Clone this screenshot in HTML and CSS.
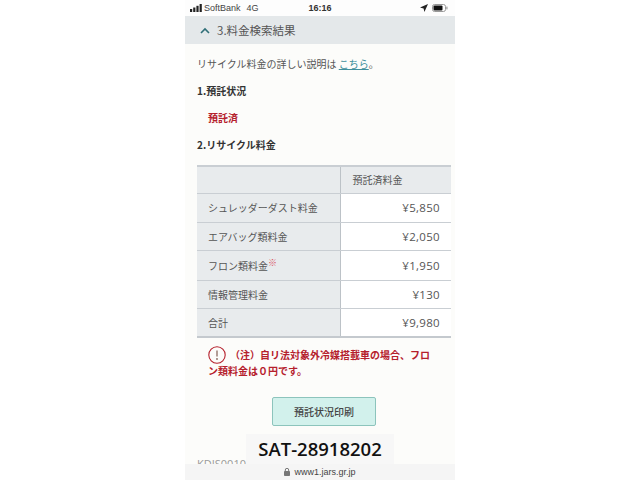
FILE: index.html
```html
<!DOCTYPE html>
<html lang="ja">
<head>
    <meta charset="UTF-8">
    <title>料金検索結果</title>
    <link rel="stylesheet" href="styles.css">
</head>
<body>

    <div class="phone">
        <!-- Status bar -->
        <div class="status-bar">
            <div class="status-left">
                <svg class="signal" width="13" height="8" viewBox="0 0 13 8"><rect x="0" y="5" width="2.2" height="3"/><rect x="3.2" y="3.5" width="2.2" height="4.5"/><rect x="6.4" y="1.8" width="2.2" height="6.2"/><rect x="9.6" y="0" width="2.2" height="8"/></svg>
                <span>SoftBank</span>
                <span class="network">4G</span>
            </div>
            <div class="status-time">16:16</div>
            <div class="status-right">
                <svg width="8" height="8" viewBox="0 0 8 8"><path d="M8 0 L0 3.6 L3.6 4.4 L4.4 8 Z" fill="#222"/></svg>
                <svg width="16" height="8" viewBox="0 0 16 8"><rect x="0.5" y="0.5" width="13" height="7" rx="2" fill="none" stroke="#999"/><rect x="1.5" y="1.5" width="9" height="5" rx="1" fill="#111"/><rect x="14.3" y="2.6" width="1.2" height="2.8" fill="#999"/></svg>
            </div>
        </div>

        <!-- Section header -->
        <div class="section-header">
            <svg class="chevron" width="10" height="7" viewBox="0 0 10 7"><path d="M1 6 L5 2 L9 6" fill="none" stroke="#2f6f78" stroke-width="1.6"/></svg>
            <span>3.料金検索結果</span>
        </div>

        <div class="content">
            <p class="intro">リサイクル料金の詳しい説明は <a class="link">こちら</a>。</p>
            <h3 class="sub-title">1.預託状況</h3>
            <p class="deposit-status">預託済</p>
            <h3 class="sub-title second">2.リサイクル料金</h3>

            <table class="fee-table">
                <tr class="row-head"><th></th><td class="head-cell">預託済料金</td></tr>
                <tr class="row-tall"><th>シュレッダーダスト料金</th><td>¥5,850</td></tr>
                <tr class="row-a"><th>エアバッグ類料金</th><td>¥2,050</td></tr>
                <tr class="row-b"><th>フロン類料金<sup class="mark">※</sup></th><td>¥1,950</td></tr>
                <tr class="row-a"><th>情報管理料金</th><td>¥130</td></tr>
                <tr class="row-tall"><th>合計</th><td>¥9,980</td></tr>
            </table>

            <div class="notice">
                <svg class="notice-icon" width="18" height="18" viewBox="0 0 18 18"><circle cx="9" cy="9" r="8.2" fill="none" stroke="#b5202c" stroke-width="1.1"/><path d="M9 4.5 V10.5" stroke="#8a6a60" stroke-width="1.3"/><circle cx="9" cy="13" r="0.9" fill="#8a6a60"/></svg><span class="notice-text">（注）自リ法対象外冷媒搭載車の場合、フロン類料金は０円です。</span>
            </div>

            <button class="print-btn">預託状況印刷</button>
            <div class="page-id">KDIS0010</div>
        </div>

        <!-- Browser url bar -->
        <div class="url-bar">
            <svg width="6" height="8" viewBox="0 0 6 8"><rect x="0" y="3" width="6" height="5" rx="0.8" fill="#777"/><path d="M1.3 3 V2 a1.7 1.7 0 0 1 3.4 0 V3" fill="none" stroke="#777"/></svg>
            <span>www1.jars.gr.jp</span>
        </div>

        <div class="stock-label">SAT-28918202</div>
    </div>

</body>
</html>
```

FILE: styles.css
```css
body {
    margin: 0;
    background-color: #fff;
    font-family: "Noto Sans CJK JP", "Open Sans", sans-serif;
    overflow: hidden;
}

.phone {
    position: relative;
    width: 270px;
    height: 480px;
    margin-left: 185px;
    background-color: #fcfcfa;
    overflow: hidden;
    display: flex;
    flex-direction: column;
}

.status-bar {
    height: 16px;
    flex: none;
    display: grid;
    grid-template-columns: 1fr auto 1fr;
    align-items: center;
    padding: 0 5px;
    box-sizing: border-box;
    font-family: "Liberation Sans", sans-serif;
    font-size: 9px;
    color: #444;
    background-color: #fdfdfd;
}

.status-left {
    display: flex;
    align-items: center;
    gap: 1px;
}

.signal {
    fill: #222;
}

.network {
    margin-left: 5px;
}

.status-time {
    font-weight: bold;
    color: #333;
}

.status-right {
    display: flex;
    justify-content: flex-end;
    align-items: center;
    gap: 4px;
    padding-right: 2px;
}

.section-header {
    height: 28px;
    flex: none;
    display: flex;
    align-items: center;
    gap: 7px;
    padding-left: 15px;
    background-color: #e4e8ea;
    font-size: 11.5px;
    color: #555;
}

.content {
    flex: 1;
    min-height: 0;
    padding: 12px 4px 0 12px;
    overflow: hidden;
}

.intro {
    margin: 0;
    font-size: 10px;
    line-height: 16px;
    color: #555;
}

.link {
    color: #3f8f9c;
    text-decoration: underline;
}

.sub-title {
    margin: 11px 0 0;
    font-size: 10px;
    line-height: 16px;
    font-weight: 700;
    color: #333;
}

.sub-title.second {
    margin-top: 11px;
}

.deposit-status {
    margin: 11px 0 0 11px;
    font-size: 10px;
    line-height: 16px;
    font-weight: 700;
    color: #b5202c;
}

.fee-table {
    width: 254px;
    margin-top: 12px;
    border-collapse: collapse;
    table-layout: fixed;
    border-top: 2px solid #c9ced3;
    border-bottom: 2px solid #c4c9ce;
    font-size: 10px;
    color: #555;
}

.fee-table th {
    width: 143px;
    padding: 0 0 0 11px;
    box-sizing: border-box;
    background-color: #e8ebed;
    border-right: 1px solid #bcc2c7;
    border-bottom: 1px solid #c9ced3;
    font-weight: normal;
    text-align: left;
    white-space: nowrap;
}

.fee-table td {
    padding: 0 11px 0 0;
    background-color: #fff;
    border-bottom: 1px solid #c9ced3;
    font-family: "Open Sans", sans-serif;
    font-size: 11.5px;
    letter-spacing: 0.3px;
    text-align: right;
}

.fee-table tr:last-child th,
.fee-table tr:last-child td {
    border-bottom: none;
}

.fee-table .head-cell {
    padding: 0 0 0 12px;
    background-color: #e8ebed;
    font-family: "Noto Sans CJK JP", sans-serif;
    font-size: 10px;
    letter-spacing: 0;
    text-align: left;
}

.row-head {
    height: 27px;
}

.row-a {
    height: 28px;
}

.row-tall {
    height: 29px;
}

.row-b {
    height: 30px;
}

.mark {
    font-size: 9px;
    line-height: 0;
    color: #d8505c;
}

.notice {
    width: 225px;
    margin: 9px 0 0 11px;
    font-size: 10px;
    line-height: 16px;
    font-weight: 700;
    color: #b5202c;
    line-break: anywhere;
}

.notice-icon {
    margin: -3px 4px -3px 0;
    vertical-align: -2px;
}

.print-btn {
    display: block;
    width: 104px;
    height: 29px;
    margin: 18px 0 0 75px;
    background-color: #d2f1ec;
    border: 1px solid #8cc4bc;
    border-radius: 2px;
    font-family: "Noto Sans CJK JP", sans-serif;
    font-size: 10px;
    font-weight: 500;
    color: #444;
}

.page-id {
    margin-top: 31px;
    font-family: "Open Sans", sans-serif;
    font-size: 11px;
    line-height: 14px;
    color: #999;
}

.url-bar {
    height: 16px;
    flex: none;
    display: flex;
    justify-content: center;
    align-items: center;
    gap: 4px;
    background-color: #f5f5f5;
    font-family: "Liberation Sans", sans-serif;
    font-size: 9px;
    color: #444;
}

/* watermark sitting over the page */
.stock-label {
    position: absolute;
    left: 61px;
    top: 434px;
    width: 148px;
    height: 30px;
    background-color: #f7f7f7;
    font-family: "Open Sans", sans-serif;
    font-size: 18.5px;
    font-weight: 600;
    line-height: 30px;
    text-align: center;
    color: #111;
}
```
